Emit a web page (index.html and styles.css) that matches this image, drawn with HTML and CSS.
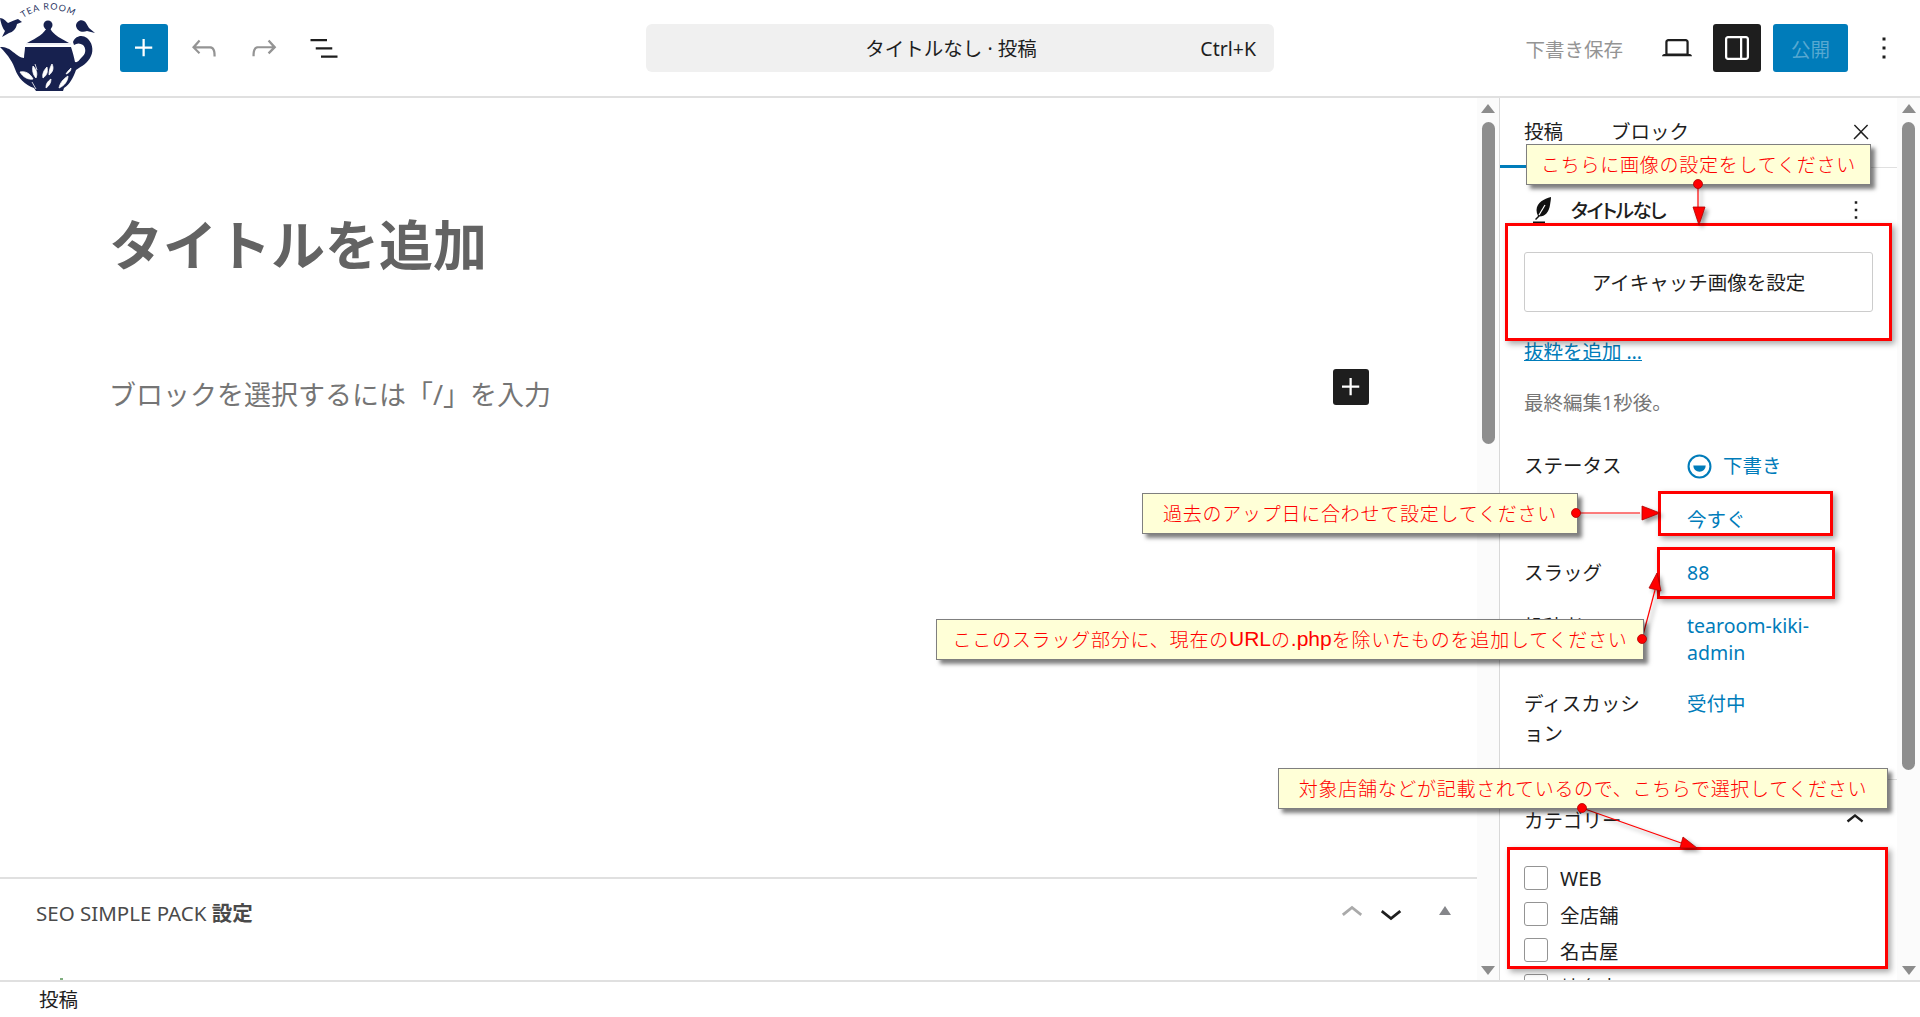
FILE: index.html
```html
<!DOCTYPE html>
<html lang="ja">
<head>
<meta charset="utf-8">
<title>タイトルなし · 投稿</title>
<link rel="stylesheet" href="styles.css">
</head>
<body>
<div class="page">
  <header class="topbar">
    <div class="top-left">
      <svg class="logo" viewBox="0 0 96 96" role="img" aria-label="Tea Room">
        <defs><path id="arc" d="M23 18 Q48 1 78 18"/></defs>
        <text class="logo-text"><textPath href="#arc">TEA ROOM</textPath></text>
        <path class="navy" d="M0 18c3 0 6 3 8 5 3-1 6-3 10-4l4 3-5 2c-1 5-4 8-8 9l-7 4 3-6C3 29 1 24 0 18z"/>
        <path class="navy" d="M76 26c0-4 4-7 8-5 2 1 3 4 5 7l6 5-8-2c-5 2-10 0-11-5z"/>
        <circle class="navy" cx="48" cy="25" r="4.5"/>
        <path class="navy" d="M47 27h3c1 6 8 10 19 16H27c10-5 18-10 20-16z"/>
        <path class="navy" d="M25 47h46c2 6 3 10 4 15 3 1 5-3 8-6 3-3 3-8 0-11-3-2-6-2-9 0l-1-3c2-6 9-8 14-4 5 4 7 12 4 18-3 7-9 10-15 14-3 8-6 14-12 18l-1 3H36l-2-3c-9-3-16-10-19-19-2-6-6-13-15-22 6 0 10 2 13 5 4 3 8 6 11 6 0-4 1-7 1-11z"/>
        <path class="leaf" d="M20 72c5-1 10 1 13 7-5 1-10-2-13-7zM33 66c3 3 5 7 3 12-3-3-4-8-3-12zM43 78c-1-4 1-8 4-11 1 5 0 8-4 11zM49 75c0-4 1-8 3-11 2 4 1 8-3 11zM59 88c1-5 4-9 9-12 0 5-4 10-9 12zM46 88c0-4 1-6 5-9 0 4-2 7-5 9zM66 74c1-2 3-4 5-6 0 3-2 5-5 6zM32 82l4 7M37 70l-2-6"/>
        <path class="rim" d="M26 44h45"/>
      </svg>
      <button class="icon-btn primary">
        <svg viewBox="0 0 24 24"><path d="M11 12.5V17.5H12.5V12.5H17.5V11H12.5V6H11V11H6V12.5H11Z"/></svg>
      </button>
      <button class="icon-btn muted">
        <svg viewBox="0 0 24 24"><path d="M18.3 11.7c-.6-.6-1.4-.9-2.3-.9H6.7l2.9-3.3-1.1-1-4.5 5L8.5 16l1-1-2.7-2.7H16c.5 0 .9.2 1.3.5 1 1 1 3.4 1 4.5v.3h1.5v-.2c0-1.5 0-4.3-1.5-5.7z"/></svg>
      </button>
      <button class="icon-btn muted">
        <svg viewBox="0 0 24 24"><path d="M15.6 6.5l-1.1 1 2.9 3.3H8c-.9 0-1.7.3-2.3.9-1.4 1.5-1.4 4.2-1.4 5.6v.2h1.5v-.3c0-1.1 0-3.5 1-4.5.3-.3.7-.5 1.3-.5h9.2L14.5 15l1.1 1.1 4.6-4.6-4.6-5z"/></svg>
      </button>
      <button class="icon-btn">
        <svg viewBox="0 0 24 24"><path d="M3 6h11v1.5H3V6zm3.5 5.5h11V13h-11v-1.5zM21 17H10v1.5h11V17z"/></svg>
      </button>
    </div>
    <div class="command">
      <span class="command-title">タイトルなし · 投稿</span>
      <span class="command-key">Ctrl+K</span>
    </div>
    <div class="top-right">
      <button class="save">下書き保存</button>
      <button class="icon-btn">
        <svg viewBox="0 0 24 24"><path d="M20.5 16h-.7V8c0-1.1-.9-2-2-2H6.2c-1.1 0-2 .9-2 2v8h-.7c-.8 0-1.5.7-1.5 1.5h20c0-.8-.7-1.5-1.5-1.5zM5.7 8c0-.3.2-.5.5-.5h11.6c.3 0 .5.2.5.5v7.6H5.7V8z"/></svg>
      </button>
      <button class="icon-btn dark">
        <svg viewBox="0 0 24 24"><path d="M18 4H6c-1.1 0-2 .9-2 2v12c0 1.1.9 2 2 2h12c1.1 0 2-.9 2-2V6c0-1.1-.9-2-2-2zm-4 14.5H6c-.3 0-.5-.2-.5-.5V6c0-.3.2-.5.5-.5h8v13zm4.5-.5c0 .3-.2.5-.5.5h-2.5v-13H18c.3 0 .5.2.5.5v12z"/></svg>
      </button>
      <button class="publish">公開</button>
      <button class="icon-btn">
        <svg viewBox="0 0 24 24"><path d="M13 19h-2v-2h2v2zm0-6h-2v-2h2v2zm0-6h-2V5h2v2z"/></svg>
      </button>
    </div>
  </header>

  <main class="workspace">
    <section class="editor">
      <div class="canvas">
        <h1 class="post-title">タイトルを追加</h1>
        <div class="block-row">
          <p class="placeholder">ブロックを選択するには「/」を入力</p>
          <button class="inline-add">
            <svg viewBox="0 0 24 24"><path d="M11 12.5V17.5H12.5V12.5H17.5V11H12.5V6H11V11H6V12.5H11Z"/></svg>
          </button>
        </div>
      </div>
      <div class="metabox">
        <h2 class="metabox-title">SEO SIMPLE PACK <b>設定</b></h2>
        <div class="metabox-tools">
          <svg class="tool light" viewBox="0 0 24 24"><path d="M6.5 12.4L12 8l5.5 4.4-.9 1.2L12 10l-4.5 3.6-1-1.2z"/></svg>
          <svg class="tool" viewBox="0 0 24 24"><path d="M17.5 11.6L12 16l-5.5-4.4.9-1.2L12 14l4.6-3.6 1 1.2z"/></svg>
          <span class="tri-small"></span>
        </div>
        <span class="green-dot"></span>
      </div>
    </section>

    <div class="scrollbar">
      <span class="arrow-up"></span>
      <span class="thumb thumb-left"></span>
      <span class="arrow-down"></span>
    </div>

    <aside class="sidebar">
      <div class="tabs">
        <span class="tab active">投稿</span>
        <span class="tab">ブロック</span>
        <svg class="close" viewBox="0 0 24 24"><path d="M13 11.8l6.1-6.3-1-1-6.1 6.2-6.1-6.2-1 1 6.1 6.3-6.5 6.7 1 1 6.5-6.6 6.5 6.6 1-1z"/></svg>
      </div>
      <div class="panel">
        <div class="post-head">
          <svg class="post-icon" viewBox="0 0 20 28"><path d="M19 1C12 3 5 6 4.500 14C4.500 16 5 18 6 20L3 23L4 24L7.500 20.500C13 20.500 17 16 18 9C18.500 6 19 3 19 1Z"/><path class="post-slit" d="M7 19L13 9"/><path d="M1 25.500h12v2H1z"/></svg>
          <strong class="post-name">タイトルなし</strong>
          <svg class="post-more" viewBox="0 0 24 24"><path d="M13 19h-2v-2h2v2zm0-6h-2v-2h2v2zm0-6h-2V5h2v2z"/></svg>
        </div>
        <button class="feature-btn">アイキャッチ画像を設定</button>
        <a class="excerpt" href="#">抜粋を追加 …</a>
        <p class="edited">最終編集1秒後。</p>
        <dl class="meta">
          <dt>ステータス</dt>
          <dd class="status">
            <svg class="status-icon" viewBox="0 0 24 24"><circle cx="12" cy="12" r="10.500"/><path class="half" d="M6 11h12a6 6 0 0 1-12 0z"/></svg>
            <span>下書き</span>
          </dd>
          <dt>公開</dt>
          <dd>今すぐ</dd>
          <dt>スラッグ</dt>
          <dd>88</dd>
          <dt>投稿者</dt>
          <dd class="tight">tearoom-kiki-admin</dd>
          <dt>ディスカッション</dt>
          <dd>受付中</dd>
        </dl>
      </div>
      <div class="panel-cat">
        <div class="cat-head">
          <span class="cat-label">カテゴリー</span>
          <svg class="cat-chev" viewBox="0 0 24 24"><path d="M6.500 12.400L12 8l5.500 4.400-.9 1.200L12 10l-4.500 3.600-1-1.200z"/></svg>
        </div>
        <ul class="cat-list">
          <li><span class="check"></span>WEB</li>
          <li><span class="check"></span>全店舗</li>
          <li><span class="check"></span>名古屋</li>
          <li><span class="check"></span>岐阜店</li>
        </ul>
      </div>
    </aside>

    <div class="scrollbar scrollbar-end">
      <span class="arrow-up"></span>
      <span class="thumb thumb-right"></span>
      <span class="arrow-down"></span>
    </div>
  </main>

  <footer class="statusbar">投稿</footer>
</div>

<div class="notes">
  <span class="box box-a"></span>
  <span class="box box-b"></span>
  <span class="box box-c"></span>
  <span class="box box-d"></span>
  <svg class="note-lines" viewBox="0 0 1920 1017">
    <g class="shadowed">
      <path class="line" d="M1698 184V210"/>
      <path class="head" d="M1693 207H1705L1699 225Z"/>
      <path class="line" d="M1576 513H1640"/>
      <path class="head" d="M1642 506L1660 513L1642 520Z"/>
      <path class="line" d="M1642 639L1655 590"/>
      <path class="head" d="M1657 573L1661 591L1649 588Z"/>
      <path class="line" d="M1582 808L1684 844"/>
      <path class="head" d="M1683 837L1697 848L1680 848Z"/>
    </g>
  </svg>
  <div class="callout note-a">こちらに画像の設定をしてください</div>
  <div class="callout note-b">過去のアップ日に合わせて設定してください</div>
  <div class="callout note-c">ここのスラッグ部分に、現在の<span class="latin">URL</span>の<span class="latin">.php</span>を除いたものを追加してください</div>
  <div class="callout note-d">対象店舗などが記載されているので、こちらで選択してください</div>
  <svg class="note-dots" viewBox="0 0 1920 1017">
    <circle cx="1698" cy="184" r="4.500"/>
    <circle cx="1576" cy="513" r="4.500"/>
    <circle cx="1642" cy="639" r="4.500"/>
    <circle cx="1582" cy="808" r="4.500"/>
  </svg>
</div>
</body>
</html>
```

FILE: styles.css
```css
* { box-sizing: border-box; }
html, body { margin: 0; height: 100%; overflow: hidden; background: #fff; }
body {
  font-family: "Noto Sans", "Noto Sans CJK JP", sans-serif;
  font-size: 19.5px;
  color: #1e1e1e;
}
button { font: inherit; border: 0; background: none; padding: 0; color: inherit; }
h1, h2, p, dl, dd, ul { margin: 0; padding: 0; }
svg { display: block; fill: currentColor; }

.page { display: flex; flex-direction: column; height: 1017px; }

/* top bar */
.topbar {
  height: 98px;
  flex: none;
  display: grid;
  grid-template-columns: 1fr 628px 1fr;
  align-items: center;
  border-bottom: 2px solid #e0e0e0;
}
.top-left { display: flex; align-items: center; gap: 12px; }
.top-right { display: flex; align-items: center; justify-content: flex-end; gap: 12px; padding-right: 12px; }
.logo { width: 96px; height: 96px; margin-right: 12px; }
.navy { fill: #17214f; }
.leaf { fill: #fff; stroke: #fff; stroke-width: .8; }
.rim { stroke: #dfe2ec; stroke-width: 1.200; fill: none; }
.logo-text { font-size: 9px; fill: #2a3563; letter-spacing: .9px; font-family: "Lato", sans-serif; }
.icon-btn {
  width: 48px; height: 48px;
  display: flex; align-items: center; justify-content: center;
  border-radius: 3px;
}
.icon-btn svg { width: 36px; height: 36px; }
.primary { background: #007cba; color: #fff; }
.muted { color: #949494; }
.dark { background: #1e1e1e; color: #fff; }

.command {
  height: 48px;
  background: #f0f0f0;
  border-radius: 6px;
  display: flex;
  align-items: center;
  justify-content: center;
  padding-right: 18px;
  position: relative;
}
.command-title { margin-bottom: 2px; }
.command-key { position: absolute; right: 18px; }
.save { color: #949494; padding: 0 18px; height: 48px; }
.publish {
  width: 75px; height: 48px;
  background: #007cba;
  color: rgba(255, 255, 255, .35);
  border-radius: 3px;
}

/* workspace */
.workspace { flex: 1; min-height: 0; display: flex; }
.editor { width: 1477px; flex: none; display: flex; flex-direction: column; }
.canvas { flex: 1; padding-top: 109px; }
.post-title {
  font-size: 54px;
  line-height: 76px;
  font-weight: 700;
  color: #636363;
  padding-left: 109px;
}
.block-row {
  display: flex;
  justify-content: space-between;
  margin-top: 90px;
  padding: 0 108px 0 109px;
}
.placeholder { font-size: 27px; line-height: 40px; color: #757575; margin-top: 2px; }
.inline-add {
  width: 36px; height: 36px;
  background: #1e1e1e; color: #fff;
  border-radius: 3px;
  margin-top: -4px;
}
.inline-add svg { width: 36px; height: 36px; }

.metabox {
  height: 103px;
  flex: none;
  border-top: 2px solid #e0e0e0;
  display: flex;
  align-items: flex-start;
  justify-content: space-between;
  padding: 19px 24px 0 36px;
  position: relative;
}
.metabox-title { font-size: 20.500px; line-height: 30px; font-weight: 400; color: #4a4a4a; }
.metabox-title b { font-weight: 700; }
.metabox-tools { display: flex; align-items: center; height: 30px; }
.tool { width: 44px; height: 44px; color: #1e1e1e; flex: none; }
.tool.light { color: #aaa; margin-right: -5px; }
.tri-small {
  width: 0; height: 0;
  margin-left: 26px; margin-right: 2px; margin-top: -5px;
  border-left: 6px solid transparent;
  border-right: 6px solid transparent;
  border-bottom: 9px solid #85868a;
}
.green-dot { position: absolute; left: 60px; bottom: 0; width: 3px; height: 2px; background: #7fae7f; }

/* scrollbars */
.scrollbar {
  width: 22px;
  flex: none;
  background: #fbfbfb;
  position: relative;
  display: flex;
  flex-direction: column;
  align-items: center;
  padding-top: 6px;
}
.scrollbar-end { flex: 1; }
.arrow-up, .arrow-down { width: 0; height: 0; border-left: 7px solid transparent; border-right: 7px solid transparent; }
.arrow-up { border-bottom: 9px solid #8c8c8c; flex: none; }
.arrow-down { border-top: 9px solid #8c8c8c; flex: none; margin-top: auto; margin-bottom: 5px; }
.thumb { width: 13px; background: #8e8e8e; border-radius: 7px; margin-top: 9px; flex: none; }
.thumb-left { height: 322px; }
.thumb-right { height: 648px; }

/* sidebar */
.sidebar {
  width: 398px;
  flex: none;
  border-left: 1px solid #d8d8d8;
  overflow: hidden;
}
.tabs {
  height: 70px;
  border-bottom: 1px solid #e0e0e0;
  display: flex;
  align-items: flex-start;
  padding: 19px 24px 0 24px;
  gap: 48px;
  position: relative;
}
.tab { line-height: 30px; }
.tab.active::after {
  content: "";
  position: absolute;
  left: 0; bottom: -1px;
  width: 90px; height: 3px;
  background: #007cba;
}
.close { width: 24px; height: 24px; margin-left: auto; margin-top: 3px; }
.panel { padding: 0 24px 30px; border-bottom: 1px solid #e0e0e0; }
.post-head { height: 84px; display: flex; align-items: center; }
.post-icon { width: 20px; height: 28px; margin-left: 8px; color: #111; }
.post-slit { stroke: #fff; stroke-width: 1.200; fill: none; }
.post-name { font-weight: 500; margin-left: 19px; font-feature-settings: "palt"; letter-spacing: -1.500px; margin-bottom: 1px; }
.post-more { width: 30px; height: 30px; margin-left: auto; margin-right: 2px; }
.feature-btn {
  display: block; width: 100%; height: 60px;
  border: 1px solid #ccc; border-radius: 3px;
  background: #fff;
  padding-bottom: 2px;
}
.excerpt { display: block; margin-top: 25px; line-height: 30px; color: #007cba; }
.edited { margin-top: 21px; line-height: 30px; color: #757575; }
.meta {
  margin-top: 33px;
  display: grid;
  grid-template-columns: 163px 1fr;
  row-gap: 23.500px;
  line-height: 30px;
}
.meta dt { padding-right: 36px; line-break: anywhere; }
.meta dd { color: #007cba; }
.meta .tight { line-height: 27px; width: 150px; overflow-wrap: anywhere; }
.status { display: flex; align-items: center; gap: 11px; }
.status-icon { width: 25px; height: 25px; }
.status-icon circle { fill: none; stroke: #007cba; stroke-width: 2; }
.status-icon .half { fill: #007cba; }

.panel-cat { padding: 0 24px; }
.cat-head {
  height: 80px;
  display: flex;
  align-items: center;
  justify-content: space-between;
}
.cat-label { margin-bottom: 2px; }
.cat-chev { width: 36px; height: 36px; }
.cat-list { list-style: none; }
.cat-list li { height: 36px; display: flex; align-items: center; gap: 12px; }
.check { width: 24px; height: 24px; border: 1px solid #949494; border-radius: 3px; }

.statusbar {
  height: 37px;
  flex: none;
  border-top: 2px solid #e0e0e0;
  padding-left: 39px;
  line-height: 35px;
  background: #fff;
}

/* annotation overlay */
.notes { position: absolute; left: 0; top: 0; width: 1920px; height: 1017px; pointer-events: none; }
.note-lines, .note-dots { position: absolute; left: 0; top: 0; width: 1920px; height: 1017px; }
.shadowed { filter: drop-shadow(3px 3px 2px rgba(0, 0, 0, .4)); }
.line { stroke: #f00; stroke-width: 1.200; fill: none; }
.head { fill: #f00; stroke: #b00000; stroke-width: .8; }
.note-dots circle { fill: #f00; stroke: #b00000; stroke-width: .8; }
.box {
  position: absolute;
  border: 3px solid #f00;
  box-shadow: 3px 3px 6px rgba(0, 0, 0, .35);
}
.box-a { left: 1505px; top: 223px; width: 387px; height: 118px; }
.box-b { left: 1658px; top: 491px; width: 175px; height: 45px; }
.box-c { left: 1657px; top: 547px; width: 178px; height: 52px; }
.box-d { left: 1507px; top: 847px; width: 381px; height: 122px; }
.callout {
  position: absolute;
  height: 41px;
  display: flex;
  align-items: center;
  justify-content: center;
  padding-bottom: 2px;
  background: #ffffd7;
  border: 1px solid #7f7f7f;
  box-shadow: 4px 4px 4px rgba(0, 0, 0, .5);
  color: #f00;
  font-family: "Noto Sans CJK JP", sans-serif;
  font-weight: 300;
  font-size: 19px;
  white-space: nowrap;
}
.latin { font-family: "Liberation Sans", sans-serif; font-size: 21px; letter-spacing: 0; }
.note-a { left: 1526px; top: 144px; width: 345px; letter-spacing: .75px; }
.note-b { left: 1142px; top: 493px; width: 436px; letter-spacing: .75px; }
.note-c { left: 936px; top: 619px; width: 708px; letter-spacing: .8px; }
.note-d { left: 1278px; top: 768px; width: 610px; letter-spacing: .7px; }
```
